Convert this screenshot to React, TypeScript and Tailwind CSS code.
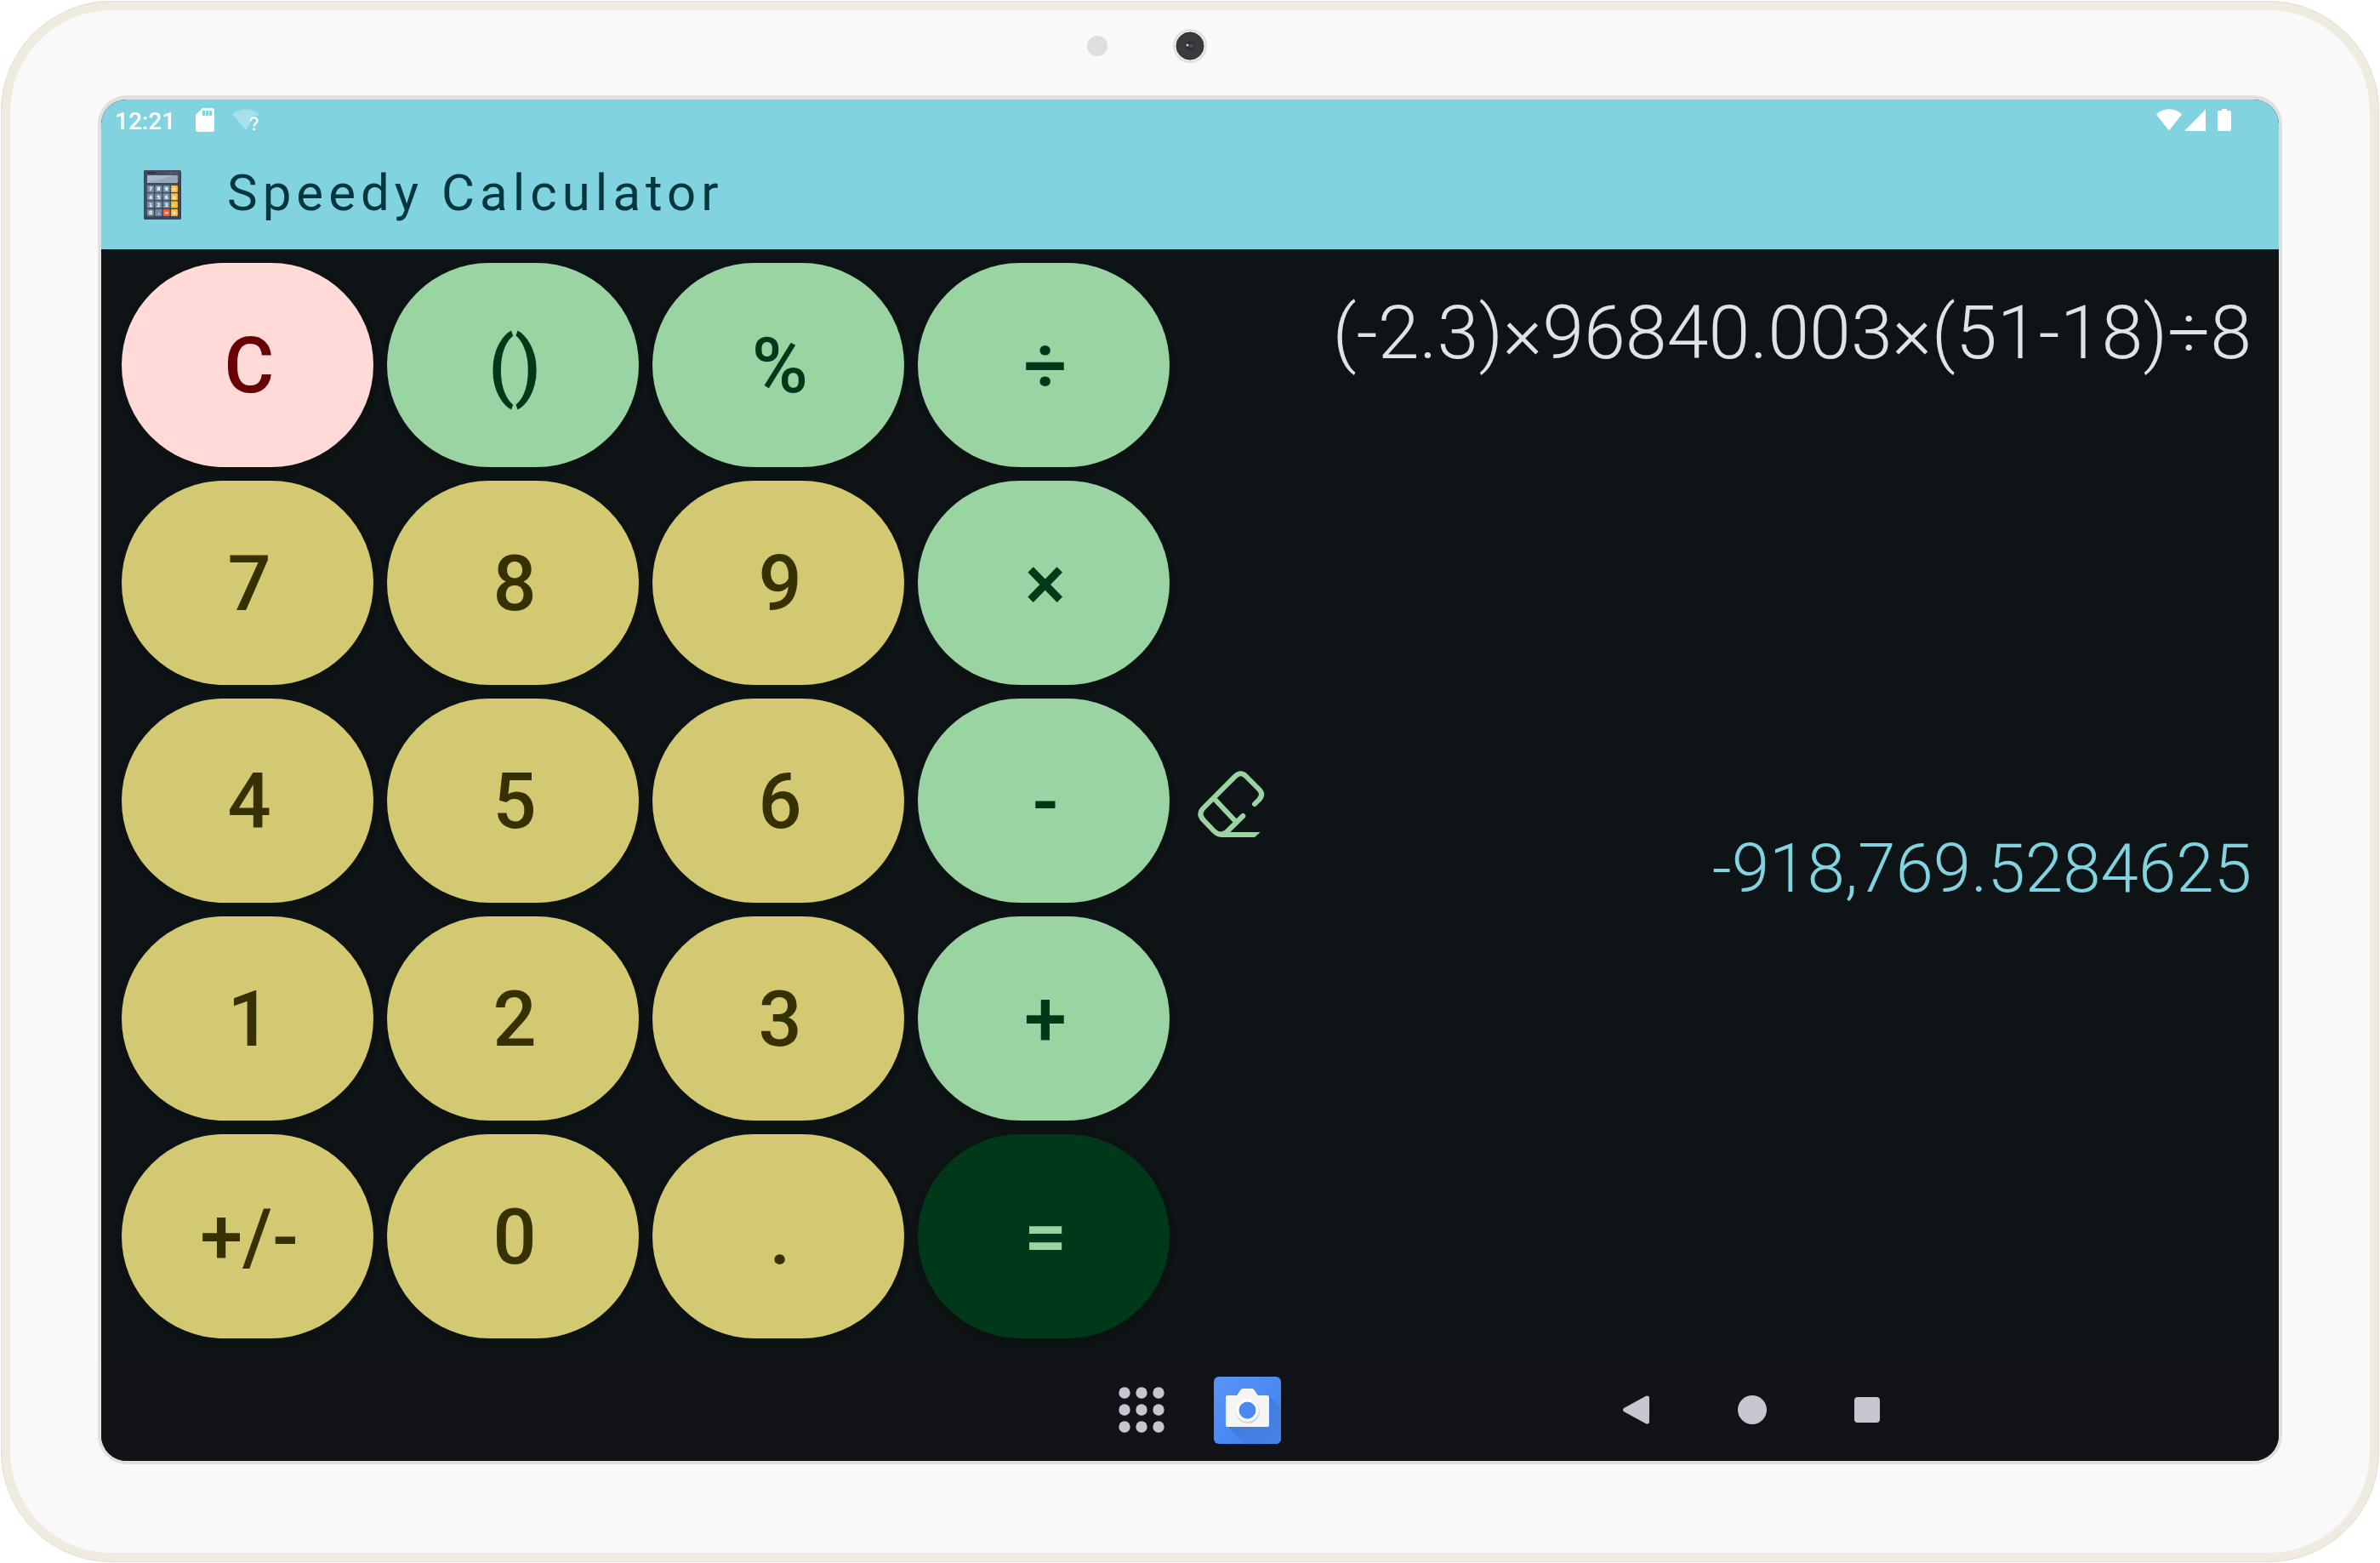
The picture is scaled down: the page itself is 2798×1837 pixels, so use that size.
import React from "react";

type Tone = "clear" | "operator" | "digit" | "equals";

const tones: Record<Tone, string> = {
  clear: "bg-[#ffdad6] text-[#690005]",
  operator: "bg-[#9bd4a3] text-[#003919]",
  digit: "bg-[#d3c972] text-[#363100]",
  equals: "bg-[#003919] text-[#9bd4a3]",
};

const keys: { label: string; tone: Tone; name?: string }[] = [
  { label: "C", tone: "clear", name: "Clear" },
  { label: "()", tone: "operator", name: "Parentheses" },
  { label: "%", tone: "operator", name: "Percent" },
  { label: "÷", tone: "operator", name: "Divide" },
  { label: "7", tone: "digit" },
  { label: "8", tone: "digit" },
  { label: "9", tone: "digit" },
  { label: "×", tone: "operator", name: "Multiply" },
  { label: "4", tone: "digit" },
  { label: "5", tone: "digit" },
  { label: "6", tone: "digit" },
  { label: "-", tone: "operator", name: "Subtract" },
  { label: "1", tone: "digit" },
  { label: "2", tone: "digit" },
  { label: "3", tone: "digit" },
  { label: "+", tone: "operator", name: "Add" },
  { label: "+/-", tone: "digit", name: "Toggle sign" },
  { label: "0", tone: "digit" },
  { label: ".", tone: "digit", name: "Decimal point" },
  { label: "=", tone: "equals", name: "Equals" },
];

function FrontCamera() {
  return (
    <svg viewBox="0 0 40 40" className="size-10" aria-hidden="true">
      <circle cx="20" cy="20" r="20" fill="#e0e0e0" />
      <circle cx="20" cy="20" r="17.5" fill="#f1f1f1" />
      <circle cx="20" cy="20" r="16" fill="#3b3b3b" stroke="#2a2a2a" strokeWidth="1" />
      <circle cx="20" cy="20" r="5" fill="#2d2b30" />
      <circle cx="21.5" cy="20" r="2.5" fill="#4b4a5c" />
      <circle cx="17" cy="19" r="1.6" fill="#d5c3cc" />
    </svg>
  );
}

function SdCardIcon() {
  return (
    <svg viewBox="0 0 22 28" className="h-7 w-[22px]" aria-hidden="true">
      <path
        fill="#fff"
        fillRule="evenodd"
        d="M8 0h11a3 3 0 0 1 3 3v22a3 3 0 0 1-3 3H3a3 3 0 0 1-3-3V8zM8 3v6h3V3zm4 0v6h3V3zm4 0v6h3V3z"
      />
    </svg>
  );
}

function WifiUnknownIcon() {
  return (
    <svg viewBox="0 0 32 26" className="h-[26px] w-8" aria-hidden="true">
      <path fill="#fff" fillOpacity="0.3" d="M0 6C9-1.500 22-1.500 31.500 6L30 8C25 7 19 10 19.500 15H22L16 25z" />
      <path
        fill="none"
        stroke="#fff"
        strokeWidth="2.400"
        d="M21.500 14.500C21.500 9 29.500 9 29.500 14C29.500 17 25.500 17 25.500 20.500"
      />
      <circle cx="25.500" cy="23.800" r="1.500" fill="#fff" />
    </svg>
  );
}

function CalculatorIcon() {
  const rows = ["789÷", "456x", "123-", "0.=+"];
  return (
    <svg viewBox="0 0 44 58" className="h-[58px] w-11" aria-hidden="true">
      <rect width="44" height="58" rx="2" fill="#323a4c" />
      <rect width="43" height="57" rx="2" fill="#434c60" />
      <path d="M0 55L44 10V56a2 2 0 0 1-2 2H2a2 2 0 0 1-2-2z" fill="#3a4254" fillOpacity="0.6" />
      <rect x="4" y="2" width="10" height="2" rx="1" fill="#2b3242" />
      <path d="M29 2v3M31.500 2v3M34 2v3M36.500 2v3M39 2v3" stroke="#616b7f" strokeWidth="1" />
      <rect x="4" y="6" width="36" height="9" rx="1" fill="#94a9b8" />
      <path d="M5 6H36L4 15V7a1 1 0 0 1 1-1z" fill="#a9bac6" />
      {rows.map((row, r) =>
        row.split("").map((ch, c) => (
          <g key={ch}>
            <rect
              x={4 + c * 9.35}
              y={18 + r * 9.3}
              width="7.900"
              height="8"
              rx="1"
              fill={ch === "=" ? "#e9603a" : c === 3 ? "#f9be38" : "#728fa2"}
            />
            <text
              x={8 + c * 9.35}
              y={24.3 + r * 9.3}
              fontSize="6"
              fontWeight="700"
              fontFamily="DejaVu Sans, sans-serif"
              textAnchor="middle"
              fill="#fff"
            >
              {ch}
            </text>
          </g>
        )),
      )}
    </svg>
  );
}

function EraserIcon() {
  return (
    <svg viewBox="0 0 96 96" className="size-24" fill="none" aria-hidden="true">
      <path
        d="M76 48L81 43Q87 36.500 81 30.500L66 15.500Q59.700 9 53 15.500L16 52.500Q9 59.500 16 67L28 79.500Q36 87.500 44 80L62.300 62M28.300 41.500L53.700 68.500"
        stroke="#9bd4a3"
        strokeWidth="6"
        strokeLinecap="round"
        strokeLinejoin="round"
      />
      <path d="M36 81H82.700L76 87H36z" fill="#9bd4a3" />
    </svg>
  );
}

function CameraAppIcon() {
  return (
    <svg viewBox="0 0 79 79" className="size-[79px]" aria-hidden="true">
      <defs>
        <linearGradient id="tile" x1="0" y1="0" x2="1" y2="1">
          <stop offset="0" stopColor="#5a93f7" />
          <stop offset="0.500" stopColor="#4b89f5" />
          <stop offset="1" stopColor="#4484ee" />
        </linearGradient>
        <linearGradient id="shade" x1="0.300" y1="0.300" x2="1" y2="1">
          <stop offset="0" stopColor="#417bdc" />
          <stop offset="1" stopColor="#4783e6" />
        </linearGradient>
      </defs>
      <rect width="79" height="79" rx="6" fill="url(#tile)" />
      <path d="M65 23L79 37V73a6 6 0 0 1-6 6H36L15 58z" fill="url(#shade)" />
      <path
        d="M16 22H27L32 15Q33 14 34 14H45Q46 14 47 15L52 22H63a2 2 0 0 1 2 2V57a2 2 0 0 1-2 2H16a2 2 0 0 1-2-2V24a2 2 0 0 1 2-2z"
        fill="#f5f5f5"
      />
      <circle cx="40" cy="41" r="14" fill="#d6d6d6" />
      <circle cx="39.500" cy="39.500" r="13.200" fill="#fff" />
      <circle cx="39.500" cy="39.500" r="10" fill="#4b89f5" />
    </svg>
  );
}

function AppsIcon() {
  const at = [7, 27, 47];
  return (
    <svg viewBox="0 0 54 54" className="size-[54px]" fill="#c6c6d0" aria-hidden="true">
      {at.map((y) => at.map((x) => <circle key={`${x}-${y}`} cx={x} cy={y} r="6.700" />))}
    </svg>
  );
}

function StatusBar() {
  return (
    <div className="flex h-12 items-center justify-between pl-4 pr-14">
      <div className="flex items-center">
        <span className="w-[95px] pt-1 text-[28px] leading-8 font-medium text-white">12:21</span>
        <SdCardIcon />
        <span className="w-[21px]" />
        <WifiUnknownIcon />
      </div>
      <svg viewBox="0 0 88 26" className="h-[26px] w-[88px]" fill="#fff" aria-hidden="true">
        <path d="M0 6.500C8-2 22-2 30 6.500L15 25.500z" />
        <path d="M33 26L58 0.500V26z" />
        <path d="M77 0h6v2h3a2 2 0 0 1 2 2v20a2 2 0 0 1-2 2H74a2 2 0 0 1-2-2V4a2 2 0 0 1 2-2h3z" />
      </svg>
    </div>
  );
}

function NavigationBar() {
  return (
    <nav className="grid h-[120px] grid-cols-[1197fr_auto_402fr_auto_469fr] items-center bg-[#121318]">
      <div className="col-start-2 flex items-center gap-[58px]">
        <button type="button" aria-label="All apps">
          <AppsIcon />
        </button>
        <button type="button" aria-label="Camera">
          <CameraAppIcon />
        </button>
      </div>
      <div className="col-start-4 flex items-center gap-[103px]">
        <button type="button" aria-label="Back">
          <svg viewBox="0 0 32 34" className="h-[34px] w-8" fill="#c6c6d0" aria-hidden="true">
            <path d="M1 15L27 0.800Q31 -0.500 31 3V31Q31 34.500 27 33.200L1 19Q-1 17 1 15z" />
          </svg>
        </button>
        <button type="button" aria-label="Home" className="size-[34px] rounded-full bg-[#c6c6d0]" />
        <button type="button" aria-label="Recent apps" className="size-[30px] rounded-[4px] bg-[#c6c6d0]" />
      </div>
    </nav>
  );
}

export default function App() {
  return (
    <div className="flex min-h-screen flex-col bg-white p-px font-[Roboto,sans-serif]">
      <div className="flex flex-1 flex-col rounded-[130px] border-[11px] border-[#efebe0] bg-[#f9f9f9] px-[103px] pb-[104px] outline-1 -outline-offset-1 outline-[#e4dfd2]">
        <div className="flex h-[100px] items-center justify-center gap-[77px] pb-4">
          <span className="size-6 rounded-full bg-[#dedede]" />
          <FrontCamera />
          <span className="size-6" />
        </div>
        <div className="flex flex-1 flex-col overflow-hidden rounded-[34px] border-4 border-t-[5px] border-[#e0e0e0] bg-[#0e1415]">
          <header className="bg-[#82d3e0]">
            <StatusBar />
            <div className="flex h-32 items-center gap-[54px] pl-[50px]">
              <CalculatorIcon />
              <h1 className="pb-1 text-[60px] leading-none font-[450] tracking-widest text-[#00363d]">
                Speedy Calculator
              </h1>
            </div>
          </header>
          <main className="grid flex-1 grid-cols-2">
            <section aria-label="Keypad" className="grid grid-cols-4 grid-rows-5 gap-4 px-6 pt-4 pb-6">
              {keys.map((key) => (
                <button
                  key={key.label}
                  type="button"
                  aria-label={key.name}
                  className={`min-h-24 rounded-full pt-1 pl-1 text-[90px] leading-none font-medium shadow-[0_3px_6px_#0c1112] ${tones[key.tone]}`}
                >
                  {key.label}
                </button>
              ))}
            </section>
            <section aria-label="Display" className="flex items-center">
              <button type="button" aria-label="Delete last character">
                <EraserIcon />
              </button>
              <div className="grid flex-1 grid-rows-2 self-stretch pr-8 text-right font-[350] whitespace-nowrap">
                <p className="pt-10 text-[88px] leading-[116px] text-[#dee3e5]">(-2.3)×96840.003×(51-18)÷8</p>
                <output className="pt-6 text-[80px] leading-[104px] text-[#82d3e0]">-918,769.5284625</output>
              </div>
            </section>
          </main>
          <NavigationBar />
        </div>
      </div>
    </div>
  );
}
